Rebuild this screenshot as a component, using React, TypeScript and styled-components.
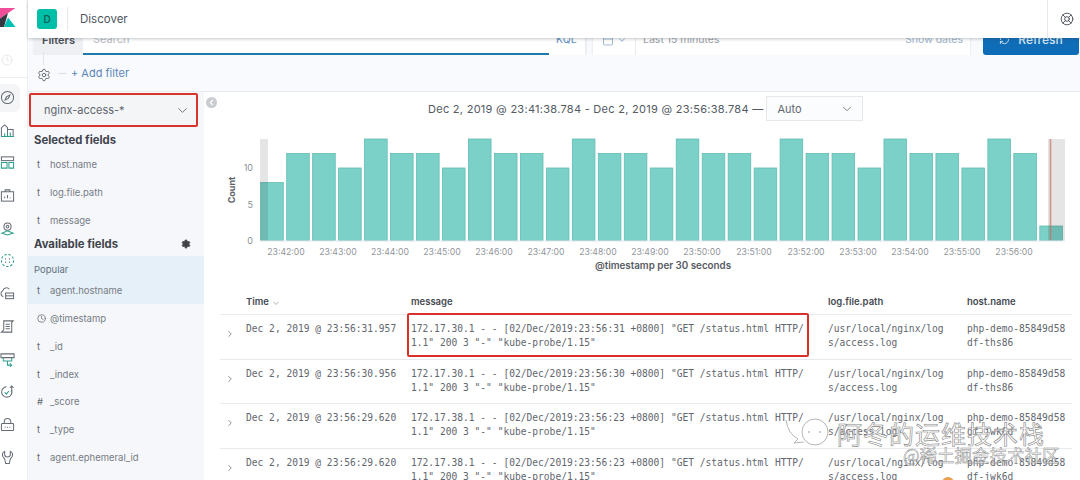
import React from 'react'
import styled, { createGlobalStyle } from 'styled-components'
import { ChevronDown, ChevronLeft, ChevronRight, Clock, Settings, RefreshCw, Calendar, LifeBuoy } from 'lucide-react'

const Global = createGlobalStyle`
html,body{margin:0;padding:0;background:#fff;}
body{width:1080px;height:480px;overflow:hidden;font-family:Inter,"Liberation Sans",sans-serif;color:#4a4e57;}
`
const Page = styled.div`
position:relative;
width:1080px;
height:480px;
overflow:hidden;
display:grid;
grid-template-columns:28px 1fr;
`
const Nav = styled.nav`
border-right:1px solid #eceef1;
display:flex;
flex-direction:column;
box-sizing:border-box;
`
const Logo = styled.div`
height:38px;
flex:none;
`
const Recent = styled.div`
height:40px;
box-sizing:border-box;
border-bottom:1px solid #eceef1;
padding:12px 0 0 1px;
color:#d5d7da;
flex:none;
`
const NavIcons = styled.div`
display:flex;
flex-direction:column;
gap:17.7px;
padding-top:12px;
color:#666c75;
`
const NavItem = styled.div<{ $active?: boolean }>`
position:relative;
padding-left:0;
height:15px;
&::before{
content:'';
display:${p => (p.$active ? 'block' : 'none')};
position:absolute;
left:-4px;
top:-6px;
width:24px;
height:28px;
border-radius:6px;
background:#f4f5f7;
}
`
const NavIcon = styled.svg`
position:relative;
display:block;
width:15px;
height:15px;
fill:none;
stroke:currentColor;
stroke-width:1.1;
`
const Main = styled.div`
min-width:0;
display:flex;
flex-direction:column;
`
const Header = styled.header`
height:38px;
flex:none;
display:flex;
align-items:center;
background:#fff;
box-shadow:0 1px 3px rgba(60,70,80,.3);
position:relative;
z-index:2;
padding-left:9px;
`
const Avatar = styled.div`
width:20px;
height:20px;
border-radius:3px;
background:#00bfa8;
color:#0e6458;
font-size:10px;
font-weight:600;
display:flex;
align-items:center;
justify-content:center;
`
const Crumb = styled.div`
margin-left:10px;
padding-left:12px;
border-left:1px solid #e8e9ec;
height:24px;
line-height:24px;
font-size:11.5px;
color:#50555e;
flex:1;
`
const HelpCell = styled.div`
width:33px;
height:38px;
box-sizing:border-box;
border-left:1px solid #e8e9ec;
display:flex;
align-items:center;
justify-content:flex-end;
padding-right:6px;
color:#444a52;
`
const Toolbar = styled.div`
height:33px;
margin-top:-16px;
flex:none;
background:#f8fafd;
display:flex;
padding-left:6px;
`
const SearchBox = styled.div`
width:552px;
display:flex;
background:#fff;
box-shadow:0 1px 2px rgba(60,70,80,.12);
border-right:1px solid #e9ebee;
box-sizing:border-box;
flex:none;
`
const FilterTag = styled.div`
width:49px;
background:#eef0f3;
font-size:11px;
font-weight:600;
color:#4a4e55;
display:flex;
align-items:center;
justify-content:center;
padding-top:2px;
box-sizing:border-box;
`
const SearchInput = styled.div`
width:466px;
box-sizing:border-box;
font-size:11px;
color:#b9bcc2;
display:flex;
align-items:center;
padding:2px 0 0 10px;
border-bottom:2px solid #1f7ba8;
`
const Kql = styled.div`
flex:1;
color:#5d8fc2;
font-size:10.5px;
display:flex;
align-items:center;
padding:2px 0 0 7px;
`
const DateBox = styled.div`
margin-left:7px;
width:377px;
background:#fff;
box-shadow:0 1px 2px rgba(60,70,80,.18);
display:flex;
align-items:center;
font-size:10.5px;
color:#a9adb4;
box-sizing:border-box;
flex:none;
padding-right:7px;
`
const CalendarCell = styled.div`
width:43px;
height:100%;
box-sizing:border-box;
border-right:1px solid #e9ebee;
display:flex;
align-items:center;
justify-content:center;
gap:3px;
padding-top:2px;
color:#7d9cc0;
`
const DateLabel = styled.span`
margin-left:7px;
flex:1;
padding-top:2px;
color:#9a9ea6;
`
const ShowDates = styled.span`
color:#9db5cb;
padding-top:2px;
`
const RefreshBtn = styled.div`
margin-left:13px;
width:96px;
background:#0f6cb6;
border-radius:3px;
color:#d5e6f3;
font-size:12px;
font-weight:500;
display:flex;
align-items:center;
justify-content:center;
gap:8px;
padding-top:2px;
box-sizing:border-box;
flex:none;
`
const FilterBar = styled.div`
height:37px;
flex:none;
box-sizing:border-box;
background:#f8fafd;
border-bottom:1px solid #e9ebee;
display:flex;
align-items:center;
padding:0 0 0 9px;
font-size:11px;
color:#5b86b8;
`
const GearWrap = styled.div`
position:relative;
display:flex;
padding-top:4px;
color:#4f555d;
&::before{
content:'';
position:absolute;
left:6px;
top:-12px;
width:1px;
height:13px;
background:#e3e5e8;
}
`
const Dash = styled.span`
width:8px;
height:1px;
background:#dcdee2;
margin:0 5px 0 7px;
`
const Body = styled.div`
flex:1;
min-height:0;
display:grid;
grid-template-columns:176px 1fr;
`
const Side = styled.aside`
background:#f5f7fb;
padding-top:1px;
`
const IndexBox = styled.div`
position:relative;
margin-left:1px;
width:169px;
height:34px;
box-sizing:border-box;
background:#f4f5f7;
border:2px solid #d9342b;
border-radius:2px;
display:flex;
align-items:center;
justify-content:space-between;
padding:0 6px 0 13px;
font-size:11px;
color:#5f646d;
`
const SideTitle = styled.div<{ $top: number }>`
height:14px;
margin-top:${p => p.$top}px;
font-size:11.3px;
font-weight:700;
color:#3f434b;
padding:0 13px 0 6px;
display:flex;
justify-content:space-between;
align-items:center;
`
const FieldList = styled.div<{ $top?: number }>`
margin-top:${p => p.$top ?? 0}px;
`
const FieldRow = styled.div`
height:27.7px;
display:flex;
align-items:center;
font-size:9.5px;
color:#777c85;
padding-left:9px;
`
const FieldType = styled.span`
width:13px;
flex:none;
font-size:9.5px;
color:#666b73;
display:flex;
`
const PopularBlock = styled.div`
background:#e6f0f8;
margin-top:5px;
height:48px;
margin-bottom:1px;
`
const PopularLabel = styled.div`
font-size:9.5px;
color:#62727f;
padding:8px 0 0 6px;
height:13px;
`
const Content = styled.section`
min-width:0;
position:relative;
padding-left:16px;
`
const CollapseDot = styled.div`
position:absolute;
left:2px;
top:5px;
width:11px;
height:11px;
border-radius:50%;
background:#c9ccd0;
color:#fff;
display:flex;
align-items:center;
justify-content:center;
`
const RangeRow = styled.div`
height:25px;
margin-top:4px;
padding-left:208px;
display:flex;
align-items:center;
gap:3px;
font-size:11px;
color:#545962;
letter-spacing:.28px;
white-space:nowrap;
`
const IntervalSelect = styled.div`
width:97px;
height:25px;
box-sizing:border-box;
border:1px solid #e6e8ec;
background:#fbfcfd;
display:flex;
align-items:center;
justify-content:space-between;
padding:0 8px 0 10px;
color:#62676f;
letter-spacing:0;
`
const ChartWrap = styled.div`
height:149px;
margin-top:8px;
`
const ChartSvg = styled.svg`
display:block;
width:860px;
height:149px;
font-family:Inter,"Liberation Sans",sans-serif;
`
const Table = styled.div`
margin-top:8px;
`
const Row = styled.div<{ $head?: boolean }>`
display:grid;
grid-template-columns:26px 165px 417px 139px 1fr;
height:${p => (p.$head ? '29px' : '44.7px')};
box-sizing:border-box;
padding-top:${p => (p.$head ? '2px' : '0')};
border-bottom:1px solid ${p => (p.$head ? '#e9ebee' : '#e7e9ec')};
width:852px;
align-items:${p => (p.$head ? 'center' : 'flex-start')};
`
const HeadCell = styled.div`
font-size:9.5px;
font-weight:600;
color:#444950;
`
const TimeSort = styled.span`
color:#c8cacd;
margin-left:1px;
`
const Cell = styled.div<{ $chars: number }>`
font-family:"DejaVu Sans Mono","Liberation Mono",monospace;
font-size:9.6px;
line-height:14px;
color:#62666e;
padding-top:7px;
width:${p => p.$chars + 0.5}ch;
word-break:break-all;
white-space:pre-wrap;
`
const Arrow = styled.div`
padding:8px 0 0 5px;
color:#777b82;
`
const Highlight = styled.div`
position:absolute;
left:407px;
top:313px;
width:402px;
height:44px;
box-sizing:border-box;
border:2px solid #d9302a;
border-radius:2px;
pointer-events:none;
`
const Mark = styled.div`
position:absolute;
left:837px;
top:415px;
font-family:"Noto Sans CJK SC",sans-serif;
font-size:25px;
line-height:36px;
letter-spacing:1px;
color:rgba(255,255,255,.55);
-webkit-text-stroke:.6px #858585;
z-index:3;
`
const SubMark = styled.div`
position:absolute;
left:903px;
top:442px;
font-family:"Noto Sans CJK SC",sans-serif;
font-size:17.5px;
line-height:26px;
color:rgba(255,255,255,.5);
-webkit-text-stroke:.5px #8c8c8c;
z-index:3;
`
const Bubble = styled.svg`
position:absolute;
left:782px;
top:412px;
width:56px;
height:44px;
fill:none;
stroke:#b5b5b5;
stroke-width:1;
z-index:3;
`
const OrangeDot = styled.div`
position:absolute;
left:942px;
top:477px;
width:12px;
height:12px;
border-radius:50%;
background:#e8a04a;
z-index:3;
`
const KibanaLogo = styled.svg`
position:absolute;
left:0;
top:8px;
width:16px;
height:20px;
`

const heights = [8,12,12,10,14,12,12,10,14,12,12,10,14,12,12,10,14,12,12,10,14,12,12,10,14,12,12,10,14,12,2]
const ticks = ['23:42:00','23:43:00','23:44:00','23:45:00','23:46:00','23:47:00','23:48:00','23:49:00','23:50:00','23:51:00','23:52:00','23:53:00','23:54:00','23:55:00','23:56:00']
const yLabels: [string, number][] = [['0', 115], ['5', 79], ['10', 42]]

const TEAL = '#2fa08f'
const NAV_ICONS = [
  <><circle cx="8" cy="8" r="6.5" /><path d="M5.5 10.5l1.6-3.4 3.4-1.6-1.6 3.4z" /></>,
  <><path d="M1.5 14V5l3.5-3 3 3v9M8 7h6v7" /><path d="M1 14.5h14M5 14v-3M8 14v-2M11 14v-4" stroke={TEAL} /></>,
  <><rect x="1.5" y="2" width="13" height="4" /><path d="M1.5 8h6v6h-6zM9.5 8h5v6h-5z" stroke={TEAL} /></>,
  <><rect x="1.5" y="4" width="13" height="10" /><path d="M5.5 4V2h5v2M5 11V9M8 11V7.5M11 11v-1" /></>,
  <><circle cx="8" cy="6" r="3.8" /><circle cx="8" cy="6" r="1.4" /><path d="M2 13l6-2.5 6 2.5-6 2z" stroke={TEAL} /></>,
  <><circle cx="8" cy="8" r="6.5" strokeDasharray="2.6 1.8" stroke={TEAL} /><path d="M6 5.5v1.5M10 5.5v1.5M6 9v1.5M10 9v1.5" /></>,
  <><path d="M3.5 11.5A3.5 3.5 0 0 1 3 5a4 4 0 0 1 7-1.5" /><rect x="6" y="7.5" width="8.5" height="6" /><path d="M6 10.5h8.5" /></>,
  <><path d="M4 2h10l-1.5 1.5V14H1.5L4 11.5z" /><path d="M6 5.5h4.5M6 8h4.5M6 10.5h4.5" /></>,
  <><path d="M1 2h14v4H1z" /><path d="M3.5 6v3.5h9V6M8 9.5V14h4" stroke={TEAL} /><path d="M10.5 12l2 2-2 2" stroke={TEAL} /></>,
  <><path d="M12.5 7a5.5 5.5 0 1 1-5.5-4" /><path d="M5 9l1.8 1.8L9.5 7.5" stroke={TEAL} /><path d="M12.5 9V2M10.5 4l2-2 2 2" /></>,
  <><rect x="1.5" y="7" width="13" height="7.5" rx="1" /><path d="M4.5 7V5a3.5 3.5 0 0 1 7 0v2" /><path d="M5 11h1M7.5 11h1M10 11h1" /></>,
  <><path d="M5 1.5v3a3 3 0 0 0 6 0v-3c2 1 3 3 2 5.5l-2 2.5-1 5H6l-1-5-2-2.5C2 4.500 3 2.500 5 1.500z" /></>,
]

const rows = [
  { time: 'Dec 2, 2019 @ 23:56:31.957', ip: '172.17.30.1', stamp: '31', host: 'php-demo-85849d58df-ths86' },
  { time: 'Dec 2, 2019 @ 23:56:30.956', ip: '172.17.30.1', stamp: '30', host: 'php-demo-85849d58df-ths86' },
  { time: 'Dec 2, 2019 @ 23:56:29.620', ip: '172.17.38.1', stamp: '23', host: 'php-demo-85849d58df-jwk6d' },
  { time: 'Dec 2, 2019 @ 23:56:29.620', ip: '172.17.38.1', stamp: '23', host: 'php-demo-85849d58df-jwk6d' },
]

const App = () => {
  const x0 = 40.7
  const step = 25.97
  const y0 = 111.5
  const unit = 7.25
  return (
    <Page>
      <Global />
      <Nav>
        <Logo>
          <KibanaLogo viewBox="0 0 16 20">
            <path d="M0 0h15.500L0 10.500z" fill="#f04e98" />
            <path d="M0 10.500L8 5 4 19H0z" fill="#343741" />
            <path d="M8 9.500L15.500 19H4z" fill="#00bfb3" />
          </KibanaLogo>
        </Logo>
        <Recent><Clock size={12} strokeWidth={1.2} /></Recent>
        <NavIcons>
          {NAV_ICONS.map((icon, i) => (
            <NavItem key={i} $active={i === 0}>
              <NavIcon viewBox="0 0 16 16">{icon}</NavIcon>
            </NavItem>
          ))}
        </NavIcons>
      </Nav>
      <Main>
        <Header>
          <Avatar>D</Avatar>
          <Crumb>Discover</Crumb>
          <HelpCell><LifeBuoy size={14} strokeWidth={1.5} /></HelpCell>
        </Header>
        <Toolbar>
          <SearchBox>
            <FilterTag>Filters</FilterTag>
            <SearchInput>Search</SearchInput>
            <Kql>KQL</Kql>
          </SearchBox>
          <DateBox>
            <CalendarCell><Calendar size={12} strokeWidth={1.4} /><ChevronDown size={10} /></CalendarCell>
            <DateLabel>Last 15 minutes</DateLabel>
            <ShowDates>Show dates</ShowDates>
          </DateBox>
          <RefreshBtn><RefreshCw size={11} />Refresh</RefreshBtn>
        </Toolbar>
        <FilterBar>
          <GearWrap><Settings size={14} strokeWidth={1.4} /></GearWrap>
          <Dash />
          + Add filter
        </FilterBar>
        <Body>
          <Side>
            <IndexBox>nginx-access-*<ChevronDown size={15} strokeWidth={1.4} /></IndexBox>
            <SideTitle $top={6}>Selected fields</SideTitle>
            <FieldList $top={4}>
              <FieldRow><FieldType>t</FieldType>host.name</FieldRow>
              <FieldRow><FieldType>t</FieldType>log.file.path</FieldRow>
              <FieldRow><FieldType>t</FieldType>message</FieldRow>
            </FieldList>
            <SideTitle $top={3}>Available fields<Settings size={10} fill="#444" strokeWidth={2} /></SideTitle>
            <PopularBlock>
              <PopularLabel>Popular</PopularLabel>
              <FieldRow><FieldType>t</FieldType>agent.hostname</FieldRow>
            </PopularBlock>
            <FieldList>
              <FieldRow><FieldType><Clock size={9} /></FieldType>@timestamp</FieldRow>
              <FieldRow><FieldType>t</FieldType>_id</FieldRow>
              <FieldRow><FieldType>t</FieldType>_index</FieldRow>
              <FieldRow><FieldType>#</FieldType>_score</FieldRow>
              <FieldRow><FieldType>t</FieldType>_type</FieldRow>
              <FieldRow><FieldType>t</FieldType>agent.ephemeral_id</FieldRow>
            </FieldList>
          </Side>
          <Content>
            <CollapseDot><ChevronLeft size={9} strokeWidth={3} /></CollapseDot>
            <RangeRow>
              Dec 2, 2019 @ 23:41:38.784 - Dec 2, 2019 @ 23:56:38.784 —
              <IntervalSelect>Auto<ChevronDown size={14} strokeWidth={1.4} /></IntervalSelect>
            </RangeRow>
            <ChartWrap>
              <ChartSvg viewBox="0 0 860 149">
                {heights.map((h, i) => (
                  <rect key={i} x={x0 + i * step} y={y0 - h * unit} width={22.6} height={h * unit} fill="#7bd1c8" stroke="#62bdb2" strokeWidth={0.8} />
                ))}
                <rect x="40" y="10" width="8" height={y0 - 10} fill="#000" opacity={0.1} />
                <rect x="828" y="10" width="17" height={y0 - 10} fill="#000" opacity={0.1} />
                <line x1="830.5" y1="10" x2="830.5" y2={y0} stroke="#c9695f" strokeWidth={1.6} opacity={0.65} />
                <line x1="40" y1={y0 + 0.5} x2="845" y2={y0 + 0.5} stroke="#e5e7ea" />
                {yLabels.map(([l, y]) => (
                  <text key={l} x="33" y={y} textAnchor="end" fontSize="9" fill="#8b9097">{l}</text>
                ))}
                <text transform="translate(15,61) rotate(-90)" fontSize="9" fontWeight="700" fill="#5c6068" textAnchor="middle">Count</text>
                {ticks.map((t, i) => (
                  <text key={t} x={66 + i * 52} y="126" textAnchor="middle" fontSize="8.7" fill="#92969c">{t}</text>
                ))}
                <text x="443" y="140" textAnchor="middle" fontSize="9.8" fontWeight="600" fill="#565a62">@timestamp per 30 seconds</text>
              </ChartSvg>
            </ChartWrap>
            <Table>
              <Row $head>
                <span />
                <HeadCell>Time <TimeSort>⌄</TimeSort></HeadCell>
                <HeadCell>message</HeadCell>
                <HeadCell>log.file.path</HeadCell>
                <HeadCell>host.name</HeadCell>
              </Row>
              {rows.map((r, i) => (
                <Row key={i}>
                  <Arrow><ChevronRight size={10} /></Arrow>
                  <Cell $chars={27}>{r.time}</Cell>
                  <Cell $chars={68}>{`${r.ip} - - [02/Dec/2019:23:56:${r.stamp} +0800] "GET /status.html HTTP/1.1" 200 3 "-" "kube-probe/1.15"`}</Cell>
                  <Cell $chars={20}>/usr/local/nginx/logs/access.log</Cell>
                  <Cell $chars={17}>{r.host}</Cell>
                </Row>
              ))}
            </Table>
          </Content>
        </Body>
      </Main>
      <Highlight />
      <Bubble viewBox="0 0 56 44">
        <path d="M4 8q2 14 12 19l-4 4 10-1" />
        <circle cx="33" cy="20" r="13" />
        <circle cx="27" cy="20" r=".6" />
        <circle cx="38" cy="20" r=".6" />
      </Bubble>
      <Mark>阿冬的运维技术栈</Mark>
      <SubMark>@稀土掘金技术社区</SubMark>
      <OrangeDot />
    </Page>
  )
}

export default App
